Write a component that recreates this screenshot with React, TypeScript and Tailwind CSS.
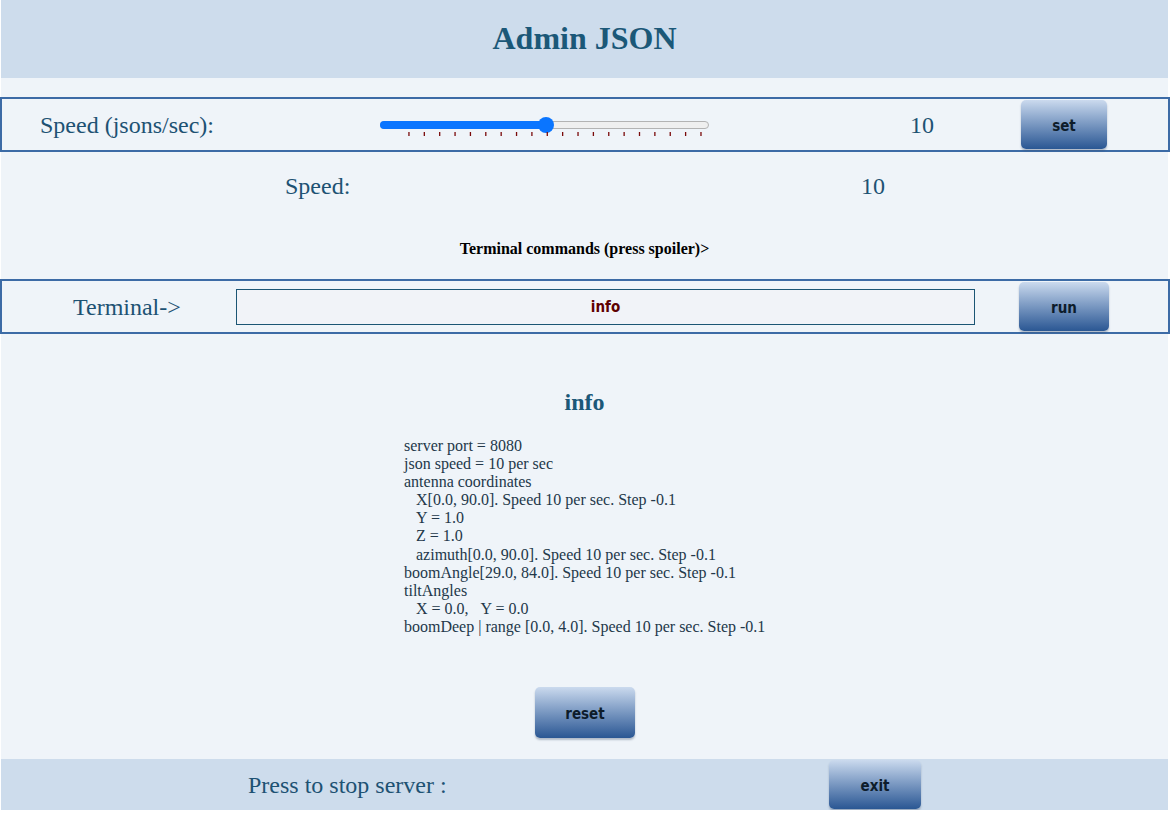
import React from 'react';

const serif = "font-['Liberation_Serif','Times_New_Roman',serif]";
const btnFont = "font-['DejaVu_Sans','Verdana',sans-serif] font-stretch-condensed";

const GradientButton: React.FC<{ label: string; className: string }> = ({ label, className }) => (
  <button
    className={`${btnFont} ${className} rounded-[5px] bg-gradient-to-b from-[#cbdaee] to-[#2a5793] pt-[3px] text-[15px] font-bold text-[#0d1c2b] shadow-[0_2px_2px_rgba(60,80,110,0.35)]`}
  >
    {label}
  </button>
);

const ticks = Array.from({ length: 20 }, (_, i) => 30.3 + i * 15.37);

const SpeedSlider: React.FC = () => (
  <svg width="332" height="28" viewBox="0 0 332 28" className="shrink-0">
    <rect x="2.5" y="10.5" width="328" height="7" rx="3.5" fill="#efefef" stroke="#b3b3b3" />
    <rect x="2" y="10" width="168" height="8" rx="4" fill="#0a75ff" />
    <circle cx="168" cy="14" r="8" fill="#0a75ff" />
    {ticks.map((x) => (
      <rect key={x} x={x} y="21" width="1.3" height="4" fill="#7a0a0a" />
    ))}
  </svg>
);

const infoLines = [
  'server port = 8080',
  'json speed = 10 per sec',
  'antenna coordinates',
  '\u00a0\u00a0\u00a0X[0.0, 90.0]. Speed 10 per sec. Step -0.1',
  '\u00a0\u00a0\u00a0Y = 1.0',
  '\u00a0\u00a0\u00a0Z = 1.0',
  '\u00a0\u00a0\u00a0azimuth[0.0, 90.0]. Speed 10 per sec. Step -0.1',
  'boomAngle[29.0, 84.0]. Speed 10 per sec. Step -0.1',
  'tiltAngles',
  '\u00a0\u00a0\u00a0X = 0.0,\u00a0\u00a0\u00a0Y = 0.0',
  'boomDeep | range [0.0, 4.0]. Speed 10 per sec. Step -0.1',
];

export default function App() {
  return (
    <div className={`${serif} w-[1170px] bg-white`}>
      <div className="ml-px w-[1167px] bg-[#eff4f9]">
        {/* header */}
        <header className="flex h-[78px] items-center justify-center bg-[#cddcec]">
          <h1 className="mb-[2px] text-[32px] font-bold text-[#1b5878]">Admin JSON</h1>
        </header>

        {/* speed box */}
        <section className="-ml-px mt-[19px] flex h-[55px] w-[1170px] items-center border-2 border-[#3c6ba6]">
          <span className="ml-[38px] w-[338px] text-[24px] text-[#1d5273]">Speed (jsons/sec):</span>
          <SpeedSlider />
          <span className="ml-[200px] w-[22px] text-[24px] text-[#1d5273]">10</span>
          <GradientButton label="set" className="ml-[89px] h-[49px] w-[86px]" />
        </section>

        {/* speed readout */}
        <div className="flex h-[70px] items-center pb-[2px] text-[24px] text-[#1d5273]">
          <span className="ml-[284px] w-[576px]">Speed:</span>
          <span>10</span>
        </div>

        <p className="mt-[17px] text-center text-[16px] font-bold leading-[20px] text-black">
          Terminal commands (press spoiler)&gt;
        </p>

        {/* terminal box */}
        <section className="-ml-px mt-[20px] flex h-[55px] w-[1170px] items-center border-2 border-[#3c6ba6]">
          <span className="ml-[71px] w-[163px] text-[24px] text-[#1d5273]">Terminal-&gt;</span>
          <div
            className={`${btnFont} flex h-[36px] w-[739px] items-center justify-center border border-[#1b5574] bg-[#f1f3f8] pt-[2px] text-[15px] font-bold text-[#5e0000]`}
          >
            info
          </div>
          <GradientButton label="run" className="ml-[44px] h-[49px] w-[90px]" />
        </section>

        {/* info */}
        <h2 className="mt-[54px] text-center text-[24px] font-bold leading-[28px] text-[#1b5878]">info</h2>
        <div className="ml-[403px] mt-[21px] whitespace-pre text-[16px] leading-[18.1px] text-[#23384a]">
          {infoLines.map((l) => (
            <div key={l}>{l}</div>
          ))}
        </div>

        <div className="flex justify-center pb-[21px] pt-[51px]">
          <GradientButton label="reset" className="ml-[1px] h-[51px] w-[100px]" />
        </div>

        {/* footer */}
        <footer className="flex h-[51px] items-center bg-[#cddcec]">
          <span className="ml-[247px] w-[581px] text-[24px] text-[#1d5273]">Press to stop server :</span>
          <GradientButton label="exit" className="h-[49px] w-[92px]" />
        </footer>
      </div>
    </div>
  );
}
